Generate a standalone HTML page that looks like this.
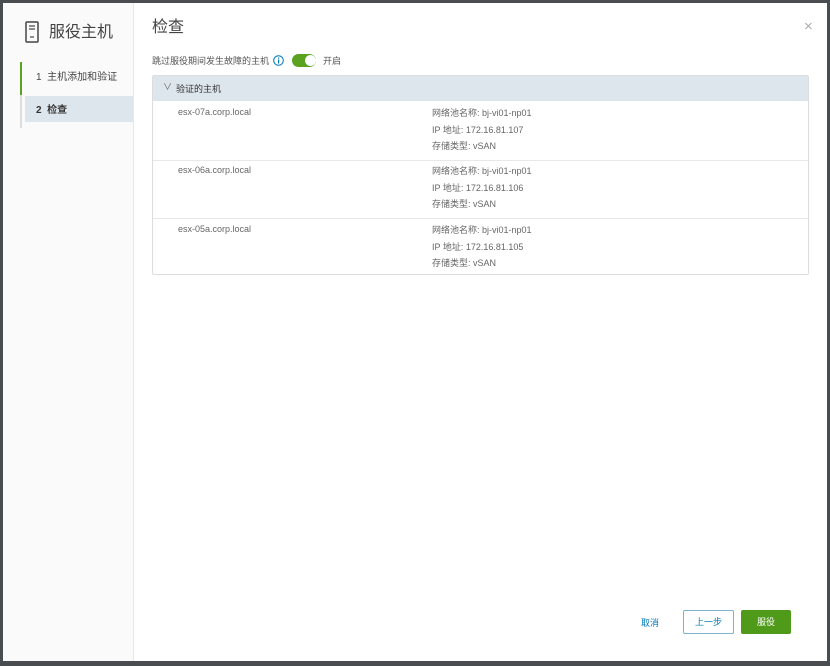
<!DOCTYPE html>
<html><head><meta charset="utf-8"><style>
*{margin:0;padding:0;box-sizing:border-box}
body{width:830px;height:666px;background:#4a4d4f;font-family:"Liberation Sans","Noto Sans CJK SC",sans-serif;position:relative;overflow:hidden}
.modal{position:absolute;left:3px;top:3px;width:824px;height:658px;background:#fff}
.side{position:absolute;left:0;top:0;width:131px;height:100%;background:#fafafa;border-right:1px solid #e8e8e8}
.t{position:absolute;font-size:10px;color:#666;white-space:nowrap}
</style></head><body>
<div class="modal">
<div class="side">
 <svg style="position:absolute;left:22px;top:18px" width="14" height="22" viewBox="0 0 14 22"><rect x="1" y="1" width="12" height="20" rx="1" fill="none" stroke="#444" stroke-width="1.5"/><line x1="4" y1="5" x2="10" y2="5" stroke="#444" stroke-width="1.2"/><line x1="4" y1="8" x2="10" y2="8" stroke="#444" stroke-width="1.2"/><line x1="5" y1="16" x2="9" y2="16" stroke="#444" stroke-width="1.2"/></svg>
 <div class="t" style="left:46px;top:15px;font-size:16px;color:#444">服役主机</div>
 <div style="position:absolute;left:17px;top:59px;width:2px;height:33px;background:#5aa220"></div>
 <div style="position:absolute;left:17px;top:92px;width:2px;height:33px;background:#ddd"></div>
 <div class="t" style="left:33px;top:65px;font-size:10px;color:#444">1&nbsp;&nbsp;主机添加和验证</div>
 <div style="position:absolute;left:22px;top:93px;width:108px;height:26px;background:#dde6ec"></div>
 <div class="t" style="left:33px;top:98px;font-size:10px;color:#333;font-weight:bold">2&nbsp;&nbsp;检查</div>
</div>
<div class="t" style="left:149px;top:10px;font-size:16px;color:#444">检查</div>
<div class="t" style="left:801px;top:15px;font-size:15px;color:#aaa">×</div>
<div class="t" style="left:149px;top:51px;font-size:9px;color:#555">跳过服役期间发生故障的主机</div>
<svg style="position:absolute;left:270px;top:52px" width="11" height="11"><circle cx="5.5" cy="5.5" r="4.8" fill="none" stroke="#0079b8"/><rect x="5" y="4.5" width="1.2" height="4" fill="#0079b8"/><rect x="5" y="2.5" width="1.2" height="1.2" fill="#0079b8"/></svg>
<div style="position:absolute;left:289px;top:51px;width:24px;height:13px;border-radius:7px;background:#5aa220"></div>
<div style="position:absolute;left:302px;top:52px;width:11px;height:11px;border-radius:50%;background:#fff"></div>
<div class="t" style="left:320px;top:51px;font-size:9px;color:#555">开启</div>
<div style="position:absolute;left:149px;top:72px;width:657px;height:200px;border:1px solid #ddd;border-radius:2px">
 <div style="height:25px;background:#dde6ec"></div>
 <div class="t" style="left:10px;top:4px;font-size:9px;color:#666">∨</div>
 <div class="t" style="left:23px;top:6px;font-size:9px;color:#333">验证的主机</div>
 <div style="position:absolute;left:0;top:84px;width:100%;height:1px;background:#e8e8e8"></div>
 <div style="position:absolute;left:0;top:142px;width:100%;height:1px;background:#e8e8e8"></div>
</div>
<div class="t" style="left:175px;top:104px;font-size:9px">esx-07a.corp.local</div>
<div class="t" style="left:429px;top:102px;font-size:9px;line-height:16.7px">网络池名称: bj-vi01-np01<br>IP 地址: 172.16.81.107<br>存储类型: vSAN</div>
<div class="t" style="left:175px;top:162px;font-size:9px">esx-06a.corp.local</div>
<div class="t" style="left:429px;top:160px;font-size:9px;line-height:16.7px">网络池名称: bj-vi01-np01<br>IP 地址: 172.16.81.106<br>存储类型: vSAN</div>
<div class="t" style="left:175px;top:221px;font-size:9px">esx-05a.corp.local</div>
<div class="t" style="left:429px;top:219px;font-size:9px;line-height:16.7px">网络池名称: bj-vi01-np01<br>IP 地址: 172.16.81.105<br>存储类型: vSAN</div>
<div class="t" style="left:638px;top:613px;font-size:9px;color:#0079b8">取消</div>
<div style="position:absolute;left:680px;top:607px;width:51px;height:24px;border:1px solid #7fb2cc;border-radius:2px;color:#0079b8;font-size:9px;text-align:center;line-height:22px">上一步</div>
<div style="position:absolute;left:738px;top:607px;width:50px;height:24px;background:#4f9a18;border-radius:2px;color:#fff;font-size:9px;text-align:center;line-height:24px">服役</div>
</div>
</body></html>
